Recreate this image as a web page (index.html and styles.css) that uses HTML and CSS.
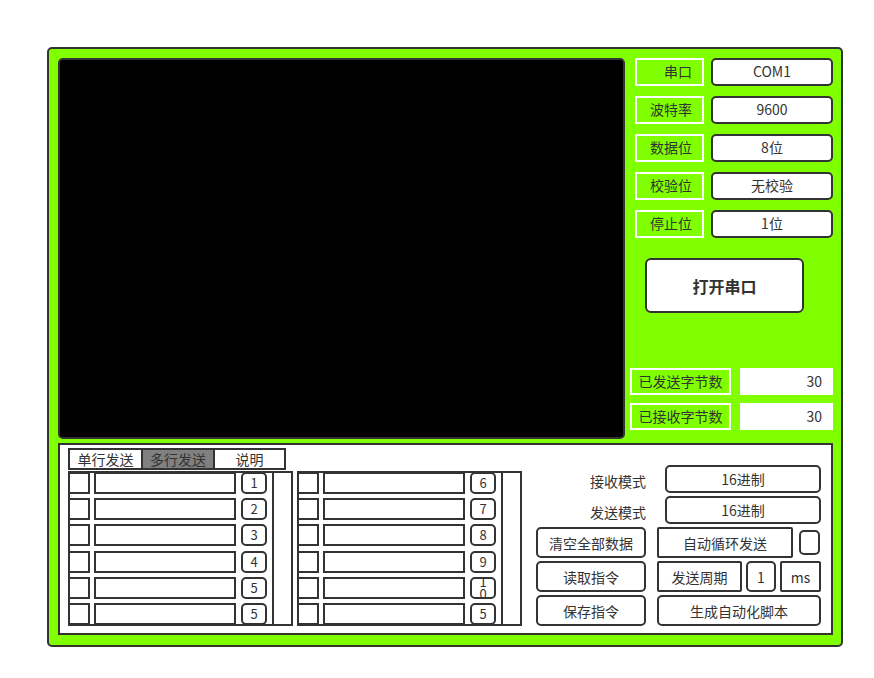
FILE: index.html
```html
<!DOCTYPE html>
<html lang="zh-CN">
<head>
<meta charset="utf-8">
<title>串口助手</title>
<link rel="stylesheet" href="styles.css">
</head>
<body>
<div class="frame">
  <div class="top">
    <div class="screen"></div>
    <div class="side">
      <div class="settings">
        <div class="setting"><div class="label">串口</div><div class="value">COM1</div></div>
        <div class="setting"><div class="label">波特率</div><div class="value">9600</div></div>
        <div class="setting"><div class="label">数据位</div><div class="value">8位</div></div>
        <div class="setting"><div class="label">校验位</div><div class="value">无校验</div></div>
        <div class="setting"><div class="label">停止位</div><div class="value">1位</div></div>
      </div>
      <div class="open">打开串口</div>
      <div class="counters">
        <div class="counter"><div class="clabel">已发送字节数</div><div class="cvalue">30</div></div>
        <div class="counter"><div class="clabel">已接收字节数</div><div class="cvalue">30</div></div>
      </div>
    </div>
  </div>
  <div class="bottom">
    <div class="multi">
      <div class="tabs">
        <div class="tab">单行发送</div>
        <div class="tab active">多行发送</div>
        <div class="tab">说明</div>
      </div>
      <div class="tables">
        <div class="table">
          <div class="rows">
            <div class="row"><span class="chk"></span><span class="input"></span><span class="num">1</span></div>
            <div class="row"><span class="chk"></span><span class="input"></span><span class="num">2</span></div>
            <div class="row"><span class="chk"></span><span class="input"></span><span class="num">3</span></div>
            <div class="row"><span class="chk"></span><span class="input"></span><span class="num">4</span></div>
            <div class="row"><span class="chk"></span><span class="input"></span><span class="num">5</span></div>
            <div class="row"><span class="chk"></span><span class="input"></span><span class="num">5</span></div>
          </div>
          <div class="scroll"></div>
        </div>
        <div class="table">
          <div class="rows">
            <div class="row"><span class="chk"></span><span class="input"></span><span class="num">6</span></div>
            <div class="row"><span class="chk"></span><span class="input"></span><span class="num">7</span></div>
            <div class="row"><span class="chk"></span><span class="input"></span><span class="num">8</span></div>
            <div class="row"><span class="chk"></span><span class="input"></span><span class="num">9</span></div>
            <div class="row"><span class="chk"></span><span class="input"></span><span class="num wrap">10</span></div>
            <div class="row"><span class="chk"></span><span class="input"></span><span class="num">5</span></div>
          </div>
          <div class="scroll"></div>
        </div>
      </div>
    </div>
    <div class="controls">
      <div class="clbl">接收模式</div>
      <div class="box round mode">16进制</div>
      <div class="clbl">发送模式</div>
      <div class="box round mode">16进制</div>
      <div class="box round">清空全部数据</div>
      <div class="split">
        <div class="box square auto">自动循环发送</div>
        <div class="box round check"></div>
      </div>
      <div class="box round">读取指令</div>
      <div class="split">
        <div class="box square period">发送周期</div>
        <div class="box round one">1</div>
        <div class="box square unit">ms</div>
      </div>
      <div class="box round">保存指令</div>
      <div class="box round">生成自动化脚本</div>
    </div>
  </div>
</div>
</body>
</html>
```
FILE: styles.css
```css
* { box-sizing: border-box; }
html, body { margin: 0; background: #fff; }
body {
  padding: 47px 0 0 47px;
  font-family: "Noto Sans CJK SC", "Noto Sans", sans-serif;
  font-size: 14px;
  color: #333;
}
.frame {
  width: 796px;
  height: 600px;
  border: 2px solid #333;
  border-radius: 5px;
  background: #80ff00;
  padding: 9px 8px 9px 9px;
  display: flex;
  flex-direction: column;
}
.top {
  display: flex;
  gap: 5px;
  height: 381px;
  margin-bottom: 4px;
}
.screen {
  width: 567px;
  height: 381px;
  background: #000;
  border: 2px solid #333;
  border-radius: 5px;
}
.side {
  width: 203px;
  display: flex;
  flex-direction: column;
}
.settings {
  display: flex;
  flex-direction: column;
  gap: 10px;
  padding-left: 5px;
}
.setting {
  display: flex;
  gap: 7px;
  height: 28px;
}
.label {
  width: 69px;
  border: 2px solid #fff;
  text-align: right;
  padding-right: 10px;
  line-height: 23px;
}
.value {
  flex: 1;
  background: #fff;
  border: 2px solid #333;
  border-radius: 5px;
  text-align: center;
  line-height: 23px;
}
.open {
  margin: 20px 0 0 15px;
  width: 159px;
  height: 55px;
  background: #fff;
  border: 2px solid #333;
  border-radius: 6px;
  font-weight: bold;
  font-size: 16px;
  display: flex;
  align-items: center;
  justify-content: center;
}
.counters {
  margin-top: 55px;
  display: flex;
  flex-direction: column;
  gap: 8px;
}
.counter {
  display: flex;
  height: 27px;
}
.clabel {
  width: 101px;
  border: 2px solid #fff;
  text-align: center;
  line-height: 23px;
}
.cvalue {
  margin-left: 9px;
  width: 93px;
  background: #fff;
  text-align: right;
  padding-right: 11px;
  line-height: 27px;
}
.bottom {
  height: 192px;
  background: #fff;
  border: 2px solid #333;
  display: flex;
}
.multi {
  padding: 3px 0 0 8px;
  display: flex;
  flex-direction: column;
}
.tabs {
  display: flex;
  width: 218px;
  height: 22px;
  border: 2px solid #333;
}
.tab {
  width: 72px;
  text-align: center;
  line-height: 18px;
  border-left: 2px solid #333;
}
.tab:first-child { border-left: none; width: 71px; }
.tab:last-child { width: 71px; }
.tab.active { background: #808080; }
.tables {
  display: flex;
  gap: 4px;
  margin-top: 1px;
}
.table {
  width: 225px;
  height: 155px;
  border: 2px solid #333;
  display: flex;
  overflow: hidden;
}
.rows {
  display: flex;
  flex-direction: column;
  justify-content: space-between;
  margin: -1px 0 -1px -2px;
  width: 204px;
  flex: none;
}
.row {
  display: flex;
  height: 22px;
}
.chk {
  width: 22px;
  border: 2px solid #333;
}
.input {
  width: 142px;
  margin-left: 4px;
  border: 2px solid #333;
}
.num {
  width: 26px;
  margin-left: 5px;
  border: 2px solid #333;
  border-radius: 5px;
  display: flex;
  align-items: center;
  justify-content: center;
  font-size: 13px;
  line-height: 14px;
  text-align: center;
}
.num.wrap {
  padding: 0 6px;
  word-break: break-all;
  line-height: 12px;
}
.scroll {
  flex: 1;
  border-left: 2px solid #333;
}
.controls {
  margin-left: 14px;
  padding-top: 20px;
  display: grid;
  grid-template-columns: 110px 164px;
  grid-template-rows: 28px 28px 31px 31px 31px;
  column-gap: 11px;
  row-gap: 3px;
  align-content: start;
}
.clbl {
  text-align: right;
  line-height: 28px;
  padding-top: 2px;
}
.box {
  border: 2px solid #333;
  background: #fff;
  display: flex;
  align-items: center;
  justify-content: center;
}
.round { border-radius: 5px; }
.square { border-radius: 2px; }
.mode { margin-left: 8px; }
.split {
  display: flex;
  gap: 6px;
}
.auto { width: 136px; }
.check {
  width: 21px;
  height: 25px;
  margin-top: 3px;
}
.split .period { width: 85px; }
.split .one { width: 30px; margin-left: -2px; }
.split .unit { width: 41px; margin-left: -2px; }
```
